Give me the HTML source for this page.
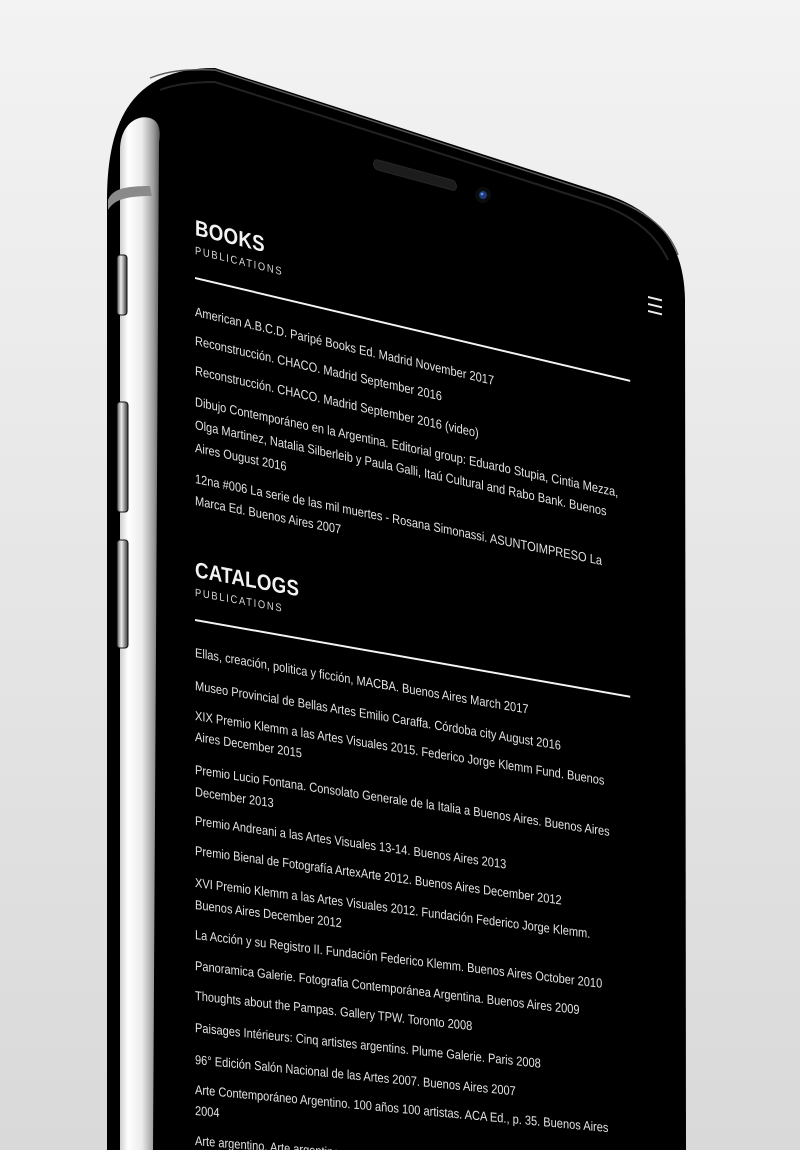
<!DOCTYPE html>
<html style="width:800px;height:1150px;overflow:hidden"><head><meta charset="utf-8"><style>
html,body{margin:0;padding:0;}
body{width:800px;height:1150px;overflow:hidden;position:relative;background:linear-gradient(180deg,#f3f3f3 0%,#e6e6e6 50%,#d9d9d9 100%);font-family:"Liberation Sans",sans-serif;}
svg.ph{position:absolute;left:0;top:0;}
#clip{position:absolute;left:0;top:0;width:800px;height:1150px;overflow:hidden;color:#e2e2e2;}
.l,.h,.s,.r{position:absolute;left:195px;white-space:nowrap;transform-origin:0 8px;}
.l{font-size:13px;line-height:16px;height:16px;}
.h{font-weight:bold;font-size:22px;letter-spacing:0.3px;color:#f2f2f2;line-height:16px;height:16px;}
.s{font-size:11px;letter-spacing:2px;line-height:16px;height:16px;color:#d8d8d8;}
.r{width:512px;height:16px;}
.r::after{content:"";position:absolute;left:0;top:7px;width:100%;height:1.7px;background:#f4f4f4;}
.m{position:absolute;left:648px;width:14px;height:1.6px;background:#eee;transform:skewY(13.5deg);transform-origin:0 0;}
</style></head><body>
<svg class="ph" width="800" height="1150" viewBox="0 0 800 1150">
<defs>
<linearGradient id="sv" x1="0" x2="1" y1="0" y2="0">
<stop offset="0" stop-color="#cfcfcf"/><stop offset="0.2" stop-color="#ffffff"/><stop offset="0.55" stop-color="#ececec"/><stop offset="0.85" stop-color="#9a9a9a"/><stop offset="1" stop-color="#5a5a5a"/>
</linearGradient>
<linearGradient id="bt" x1="0" x2="1"><stop offset="0" stop-color="#555"/><stop offset="0.4" stop-color="#eee"/><stop offset="1" stop-color="#333"/></linearGradient>
</defs>
<path d="M107 1150 L107 200 C107 110 140 68 215 68 L600 192 C655 210 684 240 685 300 L686 1150 Z" fill="#000"/>
<path d="M150 78 C170 70 190 69 215 70 L598 194 C640 207 668 226 678 255" fill="none" stroke="#5a5a5a" stroke-width="1.4"/>
<path d="M160 90 C175 84 195 82 215 82 L596 203 C630 214 655 232 668 260" fill="none" stroke="#222" stroke-width="2"/>
<path d="M120 1150 L120 150 C120 126 136 114 150 118 C159 121 161 130 159 142 L153 1150 Z" fill="url(#sv)"/>
<path d="M108 200 C112 190 122 186 150 186 L152 196 C125 196 114 200 108 210 Z" fill="#8a8a8a"/>
<rect x="117" y="255" width="10" height="60" rx="3" fill="url(#bt)" stroke="#111" stroke-width="1"/>
<rect x="117" y="402" width="11" height="110" rx="3" fill="url(#bt)" stroke="#111" stroke-width="1"/>
<rect x="117" y="540" width="11" height="108" rx="3" fill="url(#bt)" stroke="#111" stroke-width="1"/>
<path d="M378 160 L452 180 C458 182 458 192 452 190 L378 170 C372 168 372 158 378 160 Z" fill="#1c1c1c" stroke="#262626" stroke-width="1"/>
<circle cx="483" cy="195" r="8" fill="#0c0c0c"/>
<circle cx="483" cy="195" r="4" fill="#1d3a7a"/>
<circle cx="482" cy="194" r="1.4" fill="#6d8fd6"/>
</svg>
<div id="clip">
<div class="m" style="top:296px"></div><div class="m" style="top:303px"></div><div class="m" style="top:310px"></div>
<div class="h" style="top:220px;transform:skewY(13.8deg) scaleX(0.85)">BOOKS</div>
<div class="s" style="top:243px;transform:skewY(13.6deg) scaleX(0.85)">PUBLICATIONS</div>
<div class="r" style="top:270px;transform:skewY(13.3deg) scaleX(0.85)"></div>
<div class="l" style="top:304px;transform:skewY(13.0deg) scaleX(0.85)">American A.B.C.D. Paripé Books Ed. Madrid November 2017</div>
<div class="l" style="top:333px;transform:skewY(12.7deg) scaleX(0.85)">Reconstrucción. CHACO. Madrid September 2016</div>
<div class="l" style="top:363px;transform:skewY(12.4deg) scaleX(0.85)">Reconstrucción. CHACO. Madrid September 2016 (video)</div>
<div class="l" style="top:394px;transform:skewY(12.1deg) scaleX(0.85)">Dibujo Contemporáneo en la Argentina. Editorial group: Eduardo Stupia, Cintia Mezza,</div>
<div class="l" style="top:417px;transform:skewY(11.9deg) scaleX(0.85)">Olga Martinez, Natalia Silberleib y Paula Galli, Itaú Cultural and Rabo Bank. Buenos</div>
<div class="l" style="top:440px;transform:skewY(11.7deg) scaleX(0.85)">Aires Ougust 2016</div>
<div class="l" style="top:471px;transform:skewY(11.4deg) scaleX(0.85)">12na #006 La serie de las mil muertes - Rosana Simonassi. ASUNTOIMPRESO La</div>
<div class="l" style="top:493px;transform:skewY(11.15deg) scaleX(0.85)">Marca Ed. Buenos Aires 2007</div>
<div class="h" style="top:562px;transform:skewY(10.5deg) scaleX(0.85)">CATALOGS</div>
<div class="s" style="top:585px;transform:skewY(10.25deg) scaleX(0.85)">PUBLICATIONS</div>
<div class="r" style="top:612px;transform:skewY(10.0deg) scaleX(0.85)"></div>
<div class="l" style="top:645px;transform:skewY(9.65deg) scaleX(0.85)">Ellas, creación, politica y ficción, MACBA. Buenos Aires March 2017</div>
<div class="l" style="top:678px;transform:skewY(9.3deg) scaleX(0.85)">Museo Provincial de Bellas Artes Emilio Caraffa. Córdoba city August 2016</div>
<div class="l" style="top:708px;transform:skewY(9.0deg) scaleX(0.85)">XIX Premio Klemm a las Artes Visuales 2015. Federico Jorge Klemm Fund. Buenos</div>
<div class="l" style="top:729px;transform:skewY(8.8deg) scaleX(0.85)">Aires December 2015</div>
<div class="l" style="top:762px;transform:skewY(8.5deg) scaleX(0.85)">Premio Lucio Fontana. Consolato Generale de la Italia a Buenos Aires. Buenos Aires</div>
<div class="l" style="top:784px;transform:skewY(8.25deg) scaleX(0.85)">December 2013</div>
<div class="l" style="top:813px;transform:skewY(7.97deg) scaleX(0.85)">Premio Andreani a las Artes Visuales 13-14. Buenos Aires 2013</div>
<div class="l" style="top:843px;transform:skewY(7.7deg) scaleX(0.85)">Premio Bienal de Fotografía ArtexArte 2012. Buenos Aires December 2012</div>
<div class="l" style="top:875px;transform:skewY(7.35deg) scaleX(0.85)">XVI Premio Klemm a las Artes Visuales 2012. Fundación Federico Jorge Klemm.</div>
<div class="l" style="top:897px;transform:skewY(7.13deg) scaleX(0.85)">Buenos Aires December 2012</div>
<div class="l" style="top:927px;transform:skewY(6.85deg) scaleX(0.85)">La Acción y su Registro II. Fundación Federico Klemm. Buenos Aires October 2010</div>
<div class="l" style="top:958px;transform:skewY(6.55deg) scaleX(0.85)">Panoramica Galerie. Fotografia Contemporánea Argentina. Buenos Aires 2009</div>
<div class="l" style="top:988px;transform:skewY(6.23deg) scaleX(0.85)">Thoughts about the Pampas. Gallery TPW. Toronto 2008</div>
<div class="l" style="top:1020px;transform:skewY(5.9deg) scaleX(0.85)">Paisages Intérieurs: Cinq artistes argentins. Plume Galerie. Paris 2008</div>
<div class="l" style="top:1052px;transform:skewY(5.6deg) scaleX(0.85)">96° Edición Salón Nacional de las Artes 2007. Buenos Aires 2007</div>
<div class="l" style="top:1082px;transform:skewY(5.27deg) scaleX(0.85)">Arte Contemporáneo Argentino. 100 años 100 artistas. ACA Ed., p. 35. Buenos Aires</div>
<div class="l" style="top:1103px;transform:skewY(5.07deg) scaleX(0.85)">2004</div>
<div class="l" style="top:1133px;transform:skewY(4.75deg) scaleX(0.85)">Arte argentino. Arte argentino contemporáneo</div>
</div>
</body></html>
